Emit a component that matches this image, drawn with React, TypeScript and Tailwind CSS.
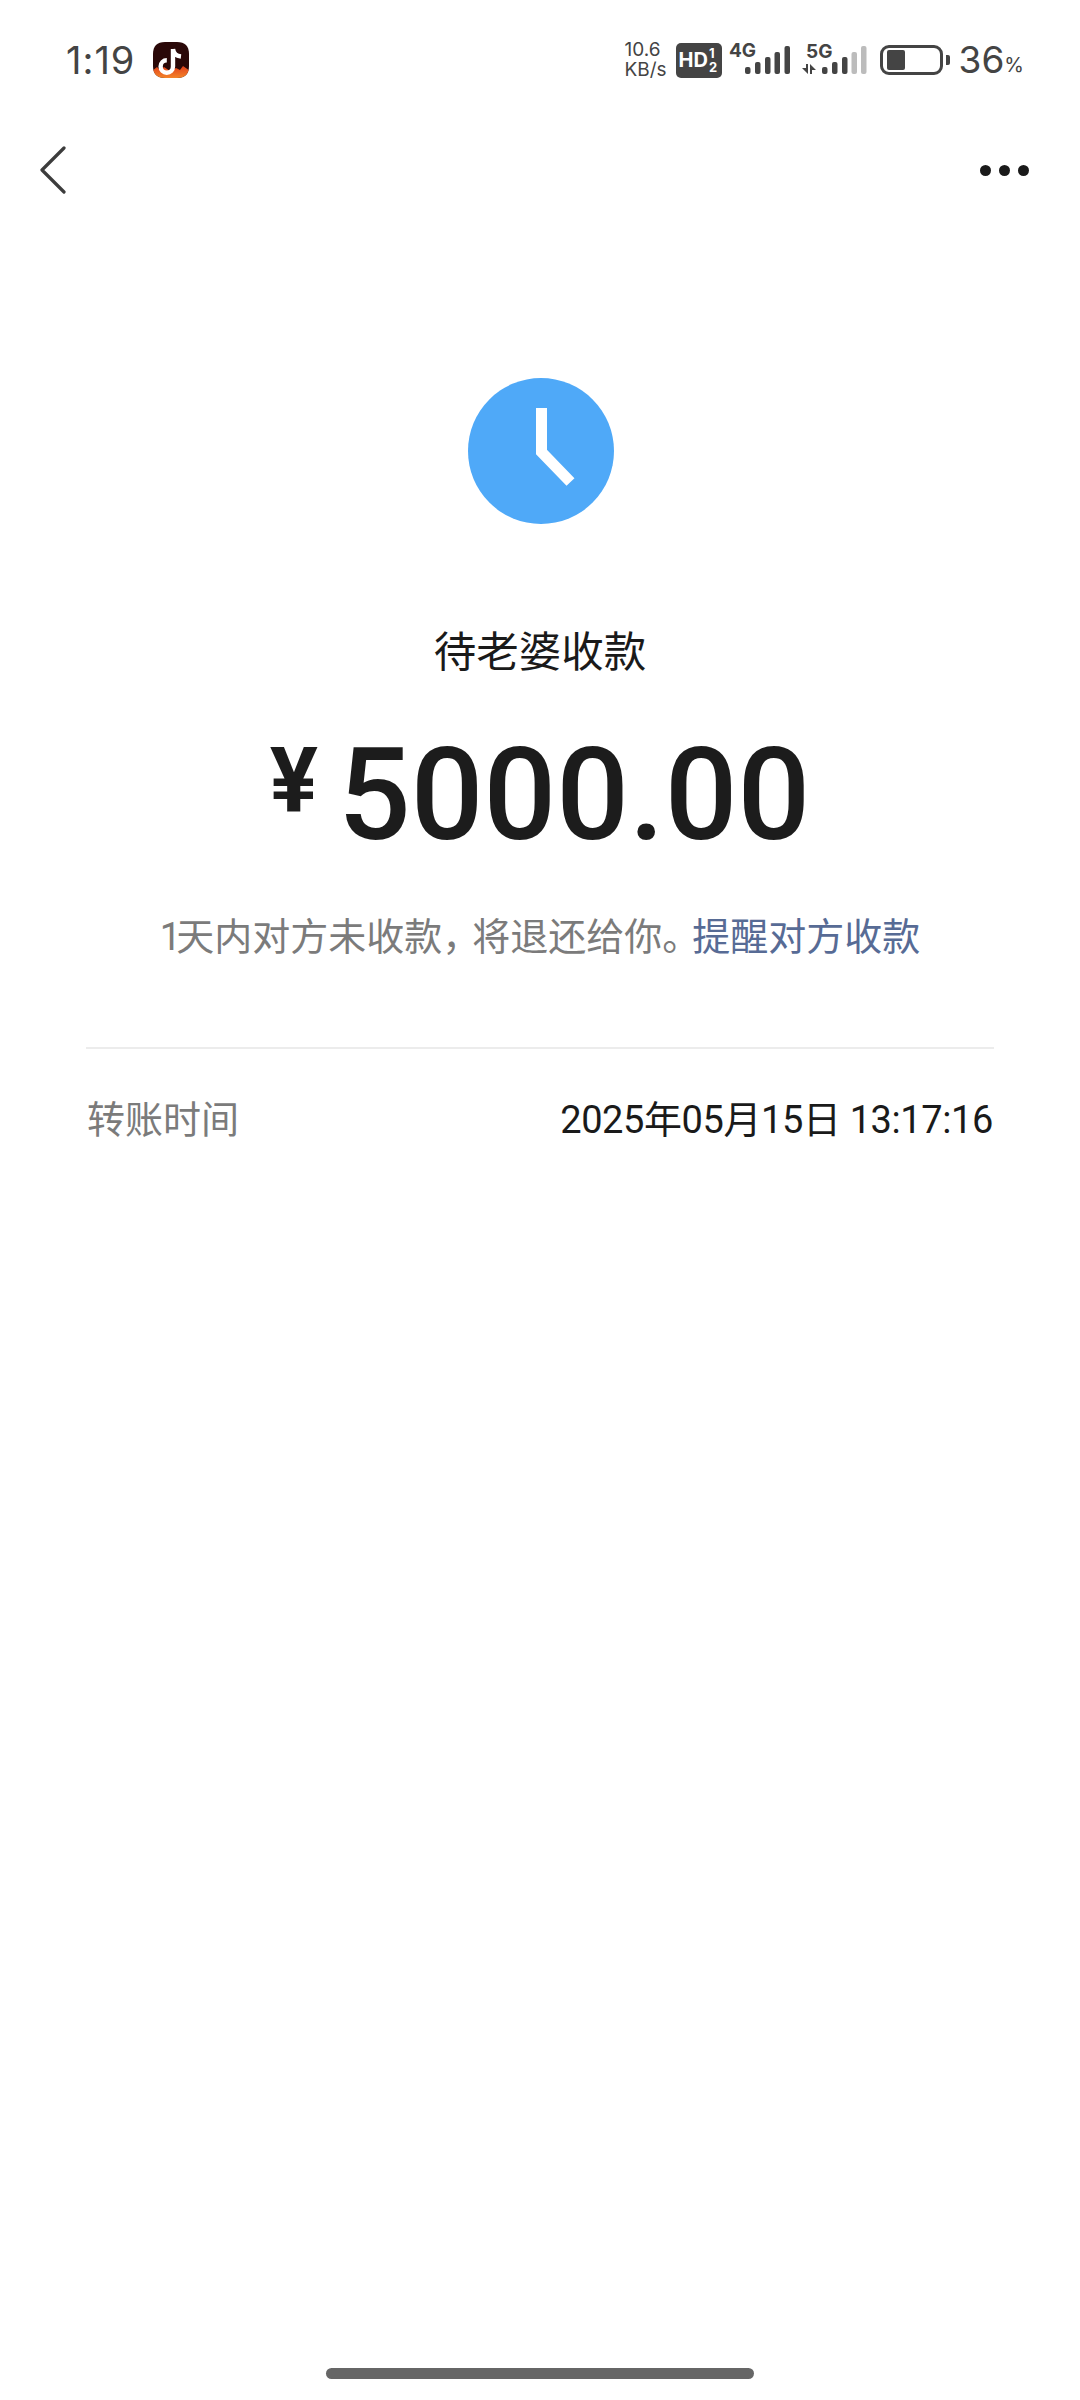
import React from 'react';

const sans = 'font-["Roboto","Noto_Sans_CJK_SC",sans-serif]';
const statusFont = 'font-["Inter",sans-serif]';

function AppBadge() {
  return (
    <svg width="38" height="38" viewBox="0 0 38 38">
      <defs>
        <linearGradient id="flame" x1="0" y1="0" x2="0" y2="1">
          <stop offset="0" stopColor="#e2401c" />
          <stop offset="1" stopColor="#f58a2a" />
        </linearGradient>
        <clipPath id="badge">
          <path d="M13 1h12c8 0 12 4 12 12v12c0 8-4 12-12 12H13C5 37 1 33 1 25V13C1 5 5 1 13 1z" />
        </clipPath>
      </defs>
      <g clipPath="url(#badge)">
        <rect width="38" height="38" fill="#2a0808" />
        <path d="M0 30l5-4 3 3 4-3 6 4 6-3 4 2 3-4 7 5v8H0z" fill="url(#flame)" />
      </g>
      <path
        d="M21 8v17.5a6.2 6.2 0 1 1-6.2-6.2M21 8c.5 4 3.5 7 8 7.5"
        fill="none"
        stroke="#fff"
        strokeWidth="4.4"
      />
    </svg>
  );
}

function Bars({ x, dim = 0 }: { x: number[]; dim?: number }) {
  const tops = [67, 62, 57, 52, 46];
  return (
    <>
      {x.map((left, i) => (
        <rect
          key={left}
          x={left}
          y={tops[i] - 42}
          width="5.5"
          height={74 - tops[i]}
          rx="2"
          fill={i >= x.length - dim ? '#bcbcbc' : '#444'}
        />
      ))}
    </>
  );
}

function Signals() {
  return (
    <svg width="142" height="52" viewBox="0 -8 142 52" className="ml-[7px]">
      <text x="0" y="15" fontFamily="Inter" fontWeight="700" fontSize="19" fill="#444">4G</text>
      <Bars x={[16, 26, 36, 45.5, 55.5]} />
      <text x="77" y="16" fontFamily="Inter" fontWeight="700" fontSize="19" fill="#444">5G</text>
      {/* up/down traffic arrows */}
      <path d="M73 26l6 6V22h-2v4zM81 22v10h2v-4h4z" fill="#444" />
      <Bars x={[93, 103, 113, 122.5, 132]} dim={2} />
    </svg>
  );
}

function Battery() {
  return (
    <div className="ml-[9px] flex items-center">
      <div className="flex h-[30px] w-[63px] items-center rounded-[9px] border-[3.5px] border-[#444] pl-[4px]">
        <div className="h-[20px] w-[18px] rounded-[2px] bg-[#444]" />
      </div>
      <div className="ml-[3px] h-[10px] w-[4px] rounded-r-[2px] bg-[#444]" />
    </div>
  );
}

function StatusBar() {
  return (
    <div className={`flex h-[120px] items-center justify-between pl-[66px] pr-[56px] text-[#444] ${statusFont}`}>
      <div className="flex items-center">
        <span className="text-[38px] leading-[44px] tracking-[1px]">1:19</span>
        <div className="ml-[17px]">
          <AppBadge />
        </div>
      </div>
      <div className="flex items-center">
        <div className="flex w-[46px] flex-col text-[19px] leading-[20px]">
          <span>10.6</span>
          <span>KB/s</span>
        </div>
        <div className="ml-[5px] flex h-[35px] w-[46px] items-center rounded-[5px] bg-[#444] pl-[3px] text-white">
          <span className="text-[20px] font-bold leading-none">HD</span>
          <span className="ml-[1px] flex flex-col text-[13px] font-bold leading-[14px]">
            <span>1</span>
            <span>2</span>
          </span>
        </div>
        <Signals />
        <Battery />
        <span className="ml-[9px] text-[37px] leading-[44px]">36</span>
        <span className="mt-[10px] text-[20px] leading-[24px]">%</span>
      </div>
    </div>
  );
}

function NavBar() {
  return (
    <div className="flex h-[100px] items-center justify-between pl-[40px] pr-[51px]">
      <svg width="26" height="48" viewBox="0 0 26 48" fill="none" stroke="#3c3c3c" strokeWidth="3.2" strokeLinecap="round" strokeLinejoin="round">
        <path d="M24 2L2 24l22 22" />
      </svg>
      <div className="flex gap-[8px]">
        <div className="h-[11px] w-[11px] rounded-full bg-[#1a1a1a]" />
        <div className="h-[11px] w-[11px] rounded-full bg-[#1a1a1a]" />
        <div className="h-[11px] w-[11px] rounded-full bg-[#1a1a1a]" />
      </div>
    </div>
  );
}

function ClockIcon() {
  return (
    <div className="flex h-[146px] w-[146px] items-center justify-center rounded-full bg-[#4fa9f8]">
      <svg width="146" height="146" viewBox="0 0 146 146" fill="none" stroke="#fff" strokeWidth="11">
        <path d="M73.5 30v44l29 30" />
      </svg>
    </div>
  );
}

export default function App() {
  return (
    <div className={`flex h-[2400px] w-[1080px] flex-col bg-white ${sans}`}>
      <StatusBar />
      <NavBar />

      <main className="flex flex-1 flex-col items-center">
        <div className="ml-[2px] mt-[158px]">
          <ClockIcon />
        </div>
        <h1 className="mt-[101px] text-[42.5px] font-normal leading-[56px] text-[#1a1a1a]">待老婆收款</h1>
        <div className="mt-[44px] flex h-[140px] items-center text-[#1c1c1c]">
          <span className="mb-[26px] text-[90px] font-bold leading-none">¥</span>
          <span className="ml-[20px] text-[128px] font-medium leading-none">5000.00</span>
        </div>
        <p className="mt-[47px] text-[38px] leading-[50px] text-[#7b7b7b]">
          <span className="tracking-[-5px]">1</span>天内对方未收款<span className="tracking-[-8px]">，</span>将退还给你<span className="tracking-[-8px]">。</span>
          <span className="text-[#576b95]">提醒对方收款</span>
        </p>

        <div className="mt-[85px] h-[2px] w-[908px] bg-[#ececec]" />

        <div className="mt-[46px] flex w-[906px] items-center justify-between leading-[50px]">
          <span className="text-[38px] text-[#7b7b7b]">转账时间</span>
          <span className="text-[38px] tracking-[-0.4px] text-[#1a1a1a]">2025年05月15日 13:17:16</span>
        </div>
      </main>

      <div className="flex justify-center pb-[21px]">
        <div className="h-[11px] w-[428px] rounded-full bg-[#666]" />
      </div>
    </div>
  );
}
